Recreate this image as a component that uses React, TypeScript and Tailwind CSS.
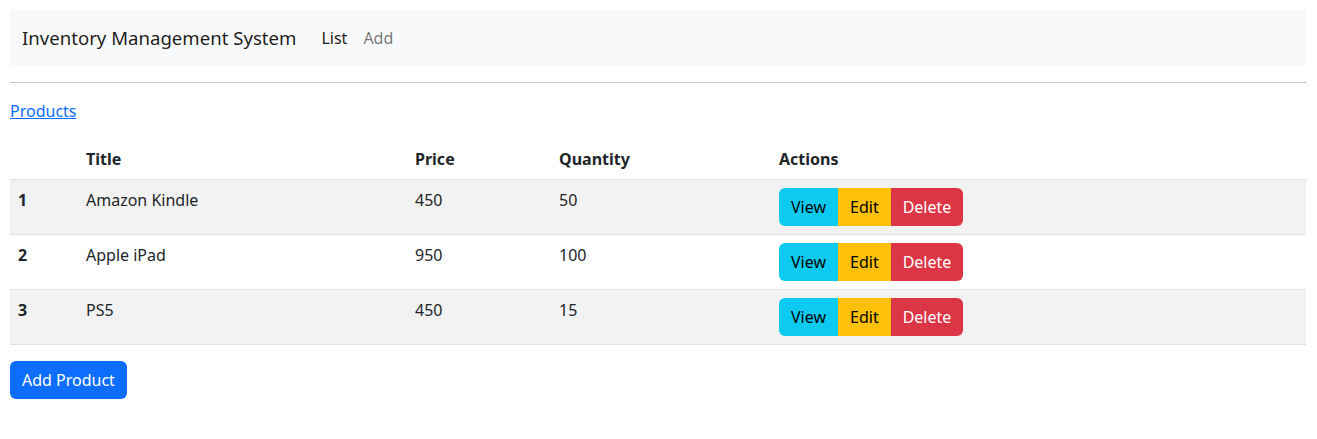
import React from 'react'

const products = [
    { id: 1, title: 'Amazon Kindle', price: 450, quantity: 50 },
    { id: 2, title: 'Apple iPad', price: 950, quantity: 100 },
    { id: 3, title: 'PS5', price: 450, quantity: 15 },
]

export default function App() {
    return (
        <div className="pl-[10px] pr-[11px] pt-[10px] text-[16px] leading-6 text-[#212529] font-['Noto_Sans','Open_Sans',sans-serif]">
            <nav className="flex h-[56px] items-center bg-[#f8f9fa] px-3">
                <span className="mr-[25px] text-[18.6px] leading-[30px] text-black/90">Inventory Management System</span>
                <div className="flex gap-4">
                    <a className="text-black/90">List</a>
                    <a className="text-black/55">Add</a>
                </div>
            </nav>

            <hr className="my-4 border-t border-[#c8c8c8]" />

            <p className="mb-4">
                <a href="#" className="text-[#0d6efd] underline">Products</a>
            </p>

            <table className="mb-4 w-full border-collapse text-left">
                <thead>
                    <tr className="border-b border-[#dee2e6]">
                        <th className="w-[68px] p-2 font-bold"></th>
                        <th className="w-[329px] p-2 font-bold">Title</th>
                        <th className="w-[144px] p-2 font-bold">Price</th>
                        <th className="w-[220px] p-2 font-bold">Quantity</th>
                        <th className="p-2 font-bold">Actions</th>
                    </tr>
                </thead>
                <tbody>
                    {products.map((p, i) => (
                        <tr
                            key={p.id}
                            className={(i % 2 === 0 ? 'bg-[#f2f2f2] ' : 'bg-white ') + 'border-b border-[#dee2e6] align-top'}
                        >
                            <td className="p-2 font-bold">{p.id}</td>
                            <td className="p-2">{p.title}</td>
                            <td className="p-2">{p.price}</td>
                            <td className="p-2">{p.quantity}</td>
                            <td className="p-2">
                                <div className="inline-flex">
                                    <button className="rounded-l-md bg-[#0dcaf0] px-3 py-[7px] text-black">View</button>
                                    <button className="bg-[#ffc107] px-3 py-[7px] text-black">Edit</button>
                                    <button className="rounded-r-md bg-[#dc3545] px-3 py-[7px] text-white">Delete</button>
                                </div>
                            </td>
                        </tr>
                    ))}
                </tbody>
            </table>

            <button className="rounded-md bg-[#0d6efd] px-3 py-[7px] text-white">Add Product</button>
        </div>
    )
}
